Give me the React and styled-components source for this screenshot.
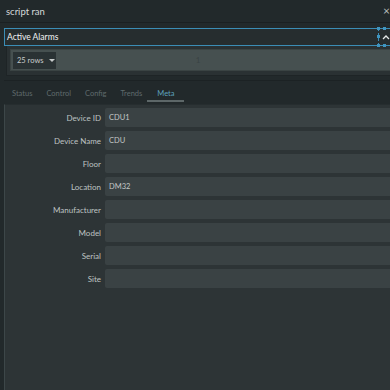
import React from "react";
import styled, { createGlobalStyle } from "styled-components";

const Global = createGlobalStyle`
  html, body { margin: 0; padding: 0; background: #22292b; }
  body { font-family: Lato, "Open Sans", sans-serif; color: #d4d8d8; width: 390px; height: 390px; overflow: hidden; }
  * { box-sizing: border-box; }
`;

const Page = styled.div`
  width: 390px;
  height: 390px;
  display: flex;
  flex-direction: column;
  background: #22292b;
  overflow: hidden;
`;

const TitleBar = styled.div`
  height: 23px;
  display: flex;
  align-items: center;
  justify-content: space-between;
  padding: 0 0 0 6px;
  font-size: 9.5px;
  color: #d6dada;
  border-bottom: 1px solid #1b2022;
`;

const Close = styled.span`
  font-size: 12px;
  color: #b8bcbc;
  line-height: 1;
`;

const Alarms = styled.div`
  margin: 5px 0 0 4px;
  display: flex;
  flex-direction: column;
`;

const AlarmHeader = styled.div`
  height: 18px;
  display: flex;
  align-items: center;
  justify-content: space-between;
  background: #262d2f;
  border-top: 1px solid #3b8db6;
  border-bottom: 1px solid #3b8db6;
  border-left: 1px solid #3b8db6;
  padding-left: 2px;
  font-size: 8.5px;
  color: #f2f4f4;
`;

const SelectBox = styled.div`
  position: relative;
  width: 12px;
  height: 18px;
  margin-top: -1px;
  margin-bottom: -1px;
  border: 1px dashed #3b8db6;
  border-right: none;
  display: flex;
  align-items: center;
  justify-content: center;
`;

const Handle = styled.span`
  position: absolute;
  width: 3px;
  height: 3px;
  background: #3f95c0;
  left: ${(p) => p.$x}px;
  top: ${(p) => p.$y}px;
`;

const AlarmBody = styled.div`
  margin-left: 2px;
  background: #2a3133;
  border: 1px solid #1e2426;
  border-right: none;
  border-top: none;
  padding: 3px 0 4px 3px;
`;

const RowsBar = styled.div`
  height: 22px;
  background: #465050;
  border: 1px solid #3a4343;
  border-right: none;
  display: flex;
  align-items: center;
  padding-left: 2px;
  position: relative;
`;

const RowsSelect = styled.div`
  width: 43px;
  height: 17px;
  background: #2a3234;
  display: flex;
  align-items: center;
  gap: 5px;
  padding: 0 0 0 4px;
  font-size: 7.5px;
  white-space: nowrap;
  color: #c8cccc;
`;

const Caret = styled.span`
  width: 0;
  height: 0;
  border-left: 3px solid transparent;
  border-right: 3px solid transparent;
  border-top: 3px solid #c8cccc;
`;

const PageNum = styled.span`
  flex: 1;
  text-align: center;
  font-size: 8px;
  color: #3a4344;
  margin-left: -50px;
`;

const Divider = styled.div`
  height: 1px;
  background: #1c2224;
  margin: 4px 0 0 4px;
`;

const Tabs = styled.div`
  display: flex;
  align-items: flex-end;
  height: 23px;
  padding-left: 12px;
  gap: 14px;
`;

const Tab = styled.div`
  position: relative;
  font-size: 7.5px;
  line-height: 10px;
  color: ${(p) => (p.$active ? "#5ea2bd" : "#5f6a6b")};
  padding-bottom: 5px;
  margin-left: ${(p) => (p.$active ? 1 : 0)}px;

  &::after {
    content: "";
    display: ${(p) => (p.$active ? "block" : "none")};
    position: absolute;
    left: -10px;
    right: -9px;
    bottom: 2px;
    height: 2px;
    background: #5d6768;
  }
`;

const Panel = styled.div`
  flex: 1;
  margin-left: 4px;
  background: #2d3436;
  border-left: 1px solid #3d4749;
  border-top: 1px solid #262d2f;
  padding-top: 3px;
  display: flex;
  flex-direction: column;
  gap: 4px;
`;

const Row = styled.div`
  display: flex;
  align-items: center;
  height: 19px;
`;

const Label = styled.div`
  width: 100px;
  text-align: right;
  font-size: 8px;
  color: #bec3c3;
  padding-right: 4px;
`;

const Field = styled.div`
  flex: 1;
  height: 19px;
  background: #3a4244;
  border-radius: 2px 0 0 2px;
  display: flex;
  align-items: center;
  padding-left: 4px;
  font-size: 7.5px;
  color: #c4c8c8;
`;

const fields = [
  ["Device ID", "CDU1"],
  ["Device Name", "CDU"],
  ["Floor", ""],
  ["Location", "DM32"],
  ["Manufacturer", ""],
  ["Model", ""],
  ["Serial", ""],
  ["Site", ""],
];

const tabs = ["Status", "Control", "Config", "Trends", "Meta"];

export default function App() {
  return (
    <Page>
      <Global />
      <TitleBar>
        <span>script ran</span>
        <Close>×</Close>
      </TitleBar>
      <Alarms>
        <AlarmHeader>
          <span>Active Alarms</span>
          <SelectBox>
            <Handle $x={-2} $y={-2} />
            <Handle $x={4} $y={-2} />
            <Handle $x={-2} $y={6} />
            <Handle $x={-2} $y={15} />
            <Handle $x={4} $y={15} />
            <svg width="8" height="6" viewBox="0 0 8 6" style={{ marginLeft: 3 }}>
              <path d="M1 5 L4 2 L7 5" fill="none" stroke="#e6eaea" strokeWidth="1.3" />
            </svg>
          </SelectBox>
        </AlarmHeader>
        <AlarmBody>
          <RowsBar>
            <RowsSelect>
              <span>25 rows</span>
              <Caret />
            </RowsSelect>
            <PageNum>1</PageNum>
          </RowsBar>
        </AlarmBody>
      </Alarms>
      <Divider />
      <Tabs>
        {tabs.map((t) => (
          <Tab key={t} $active={t === "Meta"}>
            {t}
          </Tab>
        ))}
      </Tabs>
      <Panel>
        {fields.map(([l, v]) => (
          <Row key={l}>
            <Label>{l}</Label>
            <Field>{v}</Field>
          </Row>
        ))}
      </Panel>
    </Page>
  );
}
